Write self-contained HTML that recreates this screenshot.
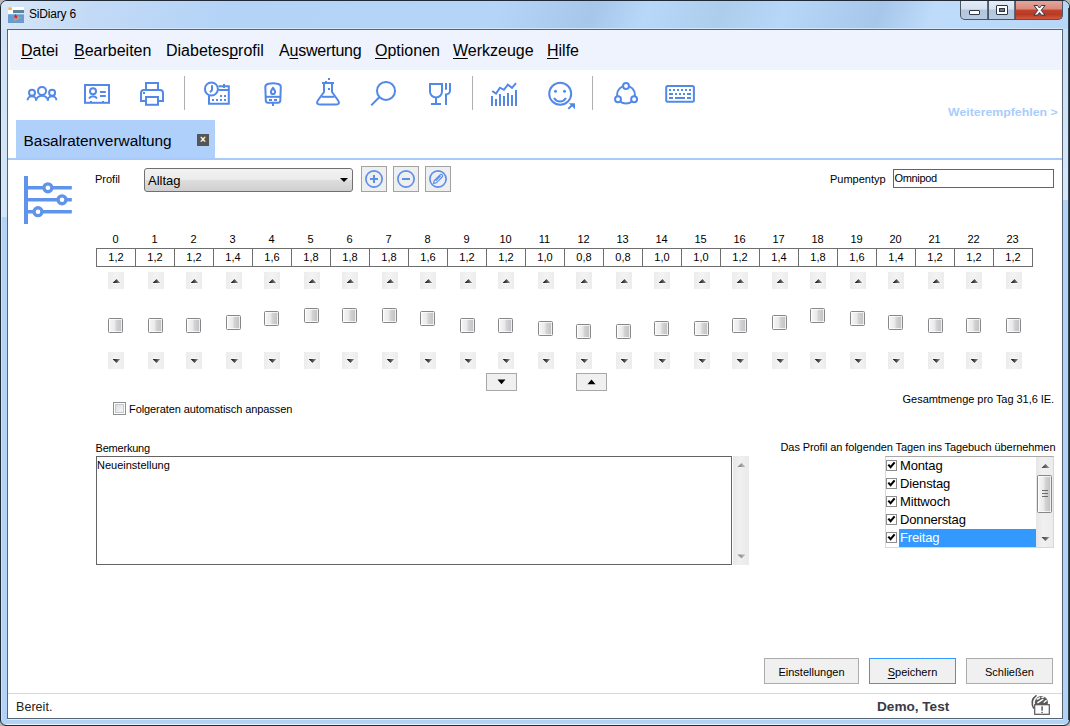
<!DOCTYPE html><html><head><meta charset="utf-8"><style>
*{margin:0;padding:0;box-sizing:border-box}
html,body{width:1070px;height:726px;overflow:hidden;background:#b8b8b8}
body{position:relative;font-family:"Liberation Sans",sans-serif;color:#000}
.a{position:absolute}
#frame{left:0;top:0;width:1070px;height:726px;border:1px solid #1f2a36;border-radius:7px 7px 6px 6px;
 background:#b3d3f6}
#client{left:7px;top:29px;width:1056px;height:690px;border:1px solid #566473;background:#fff}
.t11{font-size:11px}
u{text-decoration:underline;text-underline-offset:1.5px;text-decoration-thickness:1px;text-decoration-skip-ink:none}
.grid{left:96px;top:248px;height:19px;width:937px;border:1px solid #6e6e6e;border-right:none}
.cell{position:absolute;top:0;height:17px;width:39px;border-right:1px solid #6e6e6e;text-align:center;font-size:11px;line-height:17px}
.hr{position:absolute;top:232px;width:39px;text-align:center;font-size:11px;line-height:14px}
.sb{position:absolute;width:16px;height:17px;background:linear-gradient(90deg,#ececec,#f3f3f3 50%,#ececec)}
.up::after{content:"";position:absolute;left:5px;top:7px;border-left:3px solid transparent;border-right:3px solid transparent;border-bottom:3px solid #333}
.dn::after{content:"";position:absolute;left:5px;top:7px;border-left:3px solid transparent;border-right:3px solid transparent;border-top:3px solid #333}
.th{position:absolute;width:15px;height:15px;border:1px solid #878787;border-radius:1.5px;box-shadow:inset 0 0 0 1px rgba(255,255,255,0.75);
 background:linear-gradient(90deg,#f7f7f7 0%,#e8e8e8 48%,#d6d6d8 52%,#bfbfc3 100%)}
.btn{position:absolute;border:1px solid #adadad;background:#e1e1e1;font-size:11px;text-align:center}
</style></head><body>
<div id="frame" class="a"></div>
<div class="a" style="left:1px;top:1px;width:1068px;height:28px;border-radius:6px 6px 0 0;background:linear-gradient(110deg,#d9e7f7 0px,#c2daf6 90px,#b3d3f7 220px,#b4d4f8 470px,#a7c7ea 560px,#b8d8fa 610px,#adcdec 680px,#b7d7f9 740px,#a7c7ea 830px,#bedbfa 880px,#b4d4f6 1070px)"></div>
<div class="a" style="left:1px;top:29px;width:6px;height:188px;background:linear-gradient(#cfe2f7,#d3e5f8)"></div>
<div class="a" style="left:1063px;top:29px;width:6px;height:171px;background:linear-gradient(#c7def8,#d6e7f8)"></div>
<div class="a" style="left:1068px;top:8px;width:1px;height:712px;background:#3a4650"></div>
<svg class="a" style="left:8px;top:7px" width="16" height="16" viewBox="8 7 16 16"><rect x="8" y="7" width="16" height="7.2" fill="#fff"/><rect x="8" y="14.3" width="16" height="8.7" fill="#6a9ad2"/><rect x="8.3" y="7.3" width="3.6" height="2.6" fill="#f7b04a"/><rect x="13" y="10" width="11" height="3.2" fill="#3e6f8a" opacity="0.85"/><path d="M14 21.5 L21 18 L18.5 16.5 L13.5 19 Z" fill="#a6a48c"/><path d="M15.5 14.2 Q17.6 16 17 18 Q15.2 18.6 14.4 17 Q14.2 15.5 15.5 14.2 Z" fill="#ff1010"/></svg>
<div class="a" style="left:29px;top:6px;font-size:12px;letter-spacing:-0.2px;line-height:16px;color:#000">SiDiary 6</div>
<div class="a" style="left:960px;top:1px;width:103px;height:19px;border:1px solid #4a5866;border-top:none;border-radius:0 0 5px 5px;overflow:hidden;background:#4a5866"><div class="a" style="left:0;top:0;width:27px;height:18px;background:linear-gradient(#e4ecf6 0%,#d6e2f0 45%,#b4c6dc 50%,#b9cbe0 100%);border-right:1px solid #5a6a7a"></div><div class="a" style="left:28px;top:0;width:26px;height:18px;background:linear-gradient(#e4ecf6 0%,#d6e2f0 45%,#b4c6dc 50%,#b9cbe0 100%);border-right:1px solid #5a6a7a"></div><div class="a" style="left:55px;top:0;width:47px;height:18px;background:linear-gradient(#e6a499 0%,#d98a7c 45%,#c2432b 50%,#b93a24 75%,#d2583c 100%)"></div><svg class="a" style="left:-1px;top:0" width="103" height="19"><g stroke="#2c3848" stroke-width="1" fill="#fff"><rect x="9.5" y="9.5" width="10" height="4" rx="0.5"/><rect x="36.5" y="4.5" width="11" height="9" rx="0.5"/><rect x="39.5" y="7.5" width="5" height="3" fill="#6a7a8c" stroke="#2c3848"/><path d="M74 4.5 h3.5 l2 2.5 l2 -2.5 h3.5 l-3.8 4.8 l3.8 4.8 h-3.5 l-2 -2.5 l-2 2.5 h-3.5 l3.8 -4.8 z" stroke-linejoin="round"/></g></svg></div>
<div class="a" style="left:7px;top:28px;width:1056px;height:1px;background:#d4e6fa"></div>
<div id="client" class="a"></div>
<div class="a" style="left:7px;top:719px;width:1056px;height:1px;background:#dcedfc"></div>
<div class="a" style="left:6px;top:724px;width:1058px;height:1px;background:#f0f8fe"></div>
<div class="a" style="left:1px;top:8px;width:1px;height:712px;background:#d8e8f8;opacity:0.8"></div>
<div class="a" style="left:10px;top:30px;width:1051px;height:40px;background:#eef3fd"></div>
<div class="a" style="left:21px;top:42px;font-size:16px;line-height:18px;"><u>D</u>atei</div>
<div class="a" style="left:74px;top:42px;font-size:16px;line-height:18px;"><u>B</u>earbeiten</div>
<div class="a" style="left:166px;top:42px;font-size:16px;line-height:18px;">Diabetes<u>p</u>rofil</div>
<div class="a" style="left:279px;top:42px;font-size:16px;line-height:18px;letter-spacing:-0.2px;">A<u>u</u>swertung</div>
<div class="a" style="left:375px;top:42px;font-size:16px;line-height:18px;"><u>O</u>ptionen</div>
<div class="a" style="left:453px;top:42px;font-size:16px;line-height:18px;"><u>W</u>erkzeuge</div>
<div class="a" style="left:547px;top:42px;font-size:16px;line-height:18px;"><u>H</u>ilfe</div>
<svg class="a" style="left:0;top:0" width="1070" height="120" viewBox="0 0 1070 120"><g fill="none" stroke="#5289e8" stroke-width="2"><circle cx="42" cy="90.9" r="4"/><circle cx="32" cy="92.8" r="3"/><circle cx="52.1" cy="92.8" r="3"/><path d="M36 100.8 A6 5 0 0 1 48 100.8"/><path d="M27.6 100.2 A4.3 3.9 0 0 1 36.2 100.2"/><path d="M47.8 100.2 A4.3 3.9 0 0 1 56.4 100.2"/><rect x="85" y="85" width="24" height="17.8"/><circle cx="93" cy="91.3" r="3"/><path d="M89 98.6 A4.6 4.6 0 0 1 97 98.6"/><path d="M100 92 H105.8 M100 96 H105.8"/><path d="M146 90 V83 H158 V90"/><path d="M146 101 H141 V93 Q141 90 144 90 H160 Q163 90 163 93 V101 H158"/><rect x="146" y="97" width="12" height="7.8"/><circle cx="211.4" cy="89" r="6.5"/><path d="M212 85.3 V90.2 L210 92.2"/><path d="M218.5 86.2 H228.8 V103.7 H209 V95.6"/><path d="M218.3 90 H228.8"/><path d="M224 84 V88"/><path d="M265.3 87 Q265.3 84.6 267.8 84 Q273 82.7 278.2 84 Q280.8 84.6 280.8 87 L280.3 100.6 Q280.3 102.7 278.2 102.7 H267.8 Q265.8 102.7 265.8 100.6 Z"/><path d="M265.6 96.8 H280.6"/><path d="M273 102.7 V106"/><path d="M273 88 Q275.1 90.6 275.1 92 A2.1 2.1 0 0 1 270.9 92 Q270.9 90.6 273 88 Z"/><path d="M322 82.9 H334 M324 83 V92 L318.2 100 Q316.5 102.4 317.4 103.7 Q318.2 104.6 320.6 104.6 H335.4 Q337.8 104.6 338.6 103.7 Q339.5 102.4 337.8 100 L332 92 V83"/><path d="M321.5 96.8 H334.5"/><circle cx="386" cy="90.9" r="9"/><path d="M379.3 97.3 L371.2 105.4"/><path d="M430 84 H442 V91.5 A6 6 0 0 1 430 91.5 Z"/><path d="M436 97.5 V104 M431 104 H441"/><path d="M446 83 V89.7 M450 83 V90.5 A4 4 0 0 1 446 94.5 V105"/><path d="M492.2 91 L496 93.6 L500 87.7 L503.9 89.8 L507.9 84.6 L512 87.9 L516 83.1"/></g><g fill="#5289e8"><rect x="491" y="96" width="2" height="10"/><rect x="495" y="99" width="2" height="7"/><rect x="499" y="94" width="2" height="12"/><rect x="503" y="96" width="2" height="10"/><rect x="507" y="93" width="2" height="13"/><rect x="511" y="95" width="2" height="11"/><rect x="515" y="90" width="2" height="16"/><rect x="143" y="92" width="2" height="2"/><rect x="90" y="101" width="2" height="1"/><rect x="102" y="101" width="2" height="1"/><rect x="220" y="95" width="2" height="2"/><rect x="224" y="95" width="2" height="2"/><rect x="212" y="99" width="2" height="2"/><rect x="216" y="99" width="2" height="2"/><rect x="220" y="99" width="2" height="2"/><rect x="224" y="99" width="2" height="2"/><rect x="269" y="99" width="3" height="2"/><rect x="274" y="99" width="3" height="2"/><rect x="328" y="78" width="2" height="2"/><rect x="328" y="88" width="2" height="2"/><rect x="325" y="81" width="2" height="1"/><circle cx="555.5" cy="91.3" r="1.5"/><circle cx="564.5" cy="91.3" r="1.5"/><rect x="669" y="89" width="2" height="2"/><rect x="673" y="89" width="2" height="2"/><rect x="677" y="89" width="2" height="2"/><rect x="681" y="89" width="2" height="2"/><rect x="685" y="89" width="2" height="2"/><rect x="689" y="89" width="2" height="2"/><rect x="669" y="93" width="4" height="2"/><rect x="675" y="93" width="2" height="2"/><rect x="679" y="93" width="2" height="2"/><rect x="683" y="93" width="2" height="2"/><rect x="687" y="93" width="4" height="2"/><rect x="669" y="97" width="4" height="2"/><rect x="675" y="97" width="10" height="2"/><rect x="687" y="97" width="4" height="2"/><path d="M568.8 103.2 H575 V109.2 Z"/></g><g fill="none" stroke="#5289e8" stroke-width="2"><circle cx="560.2" cy="93.8" r="11"/><path d="M554 98 A7 7 0 0 0 566 98"/><path d="M568.3 108.9 L573 104.2"/><circle cx="626" cy="94.7" r="8.9"/><g fill="#fff"><circle cx="626" cy="86" r="2.95"/><circle cx="618" cy="99.2" r="2.95"/><circle cx="634.1" cy="99.2" r="2.95"/></g><rect x="666.2" y="86" width="27.7" height="15.8" rx="1.5"/></g><rect x="184" y="76" width="1" height="34" fill="#b0b0b0"/><rect x="472" y="76" width="1" height="34" fill="#b0b0b0"/><rect x="592" y="76" width="1" height="34" fill="#b0b0b0"/></svg>
<div class="a" style="left:16px;top:120px;width:199px;height:38px;background:#b0d0fc"></div>
<div class="a" style="left:8px;top:158px;width:1054px;height:2px;background:#a8cafb"></div>
<div class="a" style="left:23.6px;top:132px;font-size:15.4px;line-height:18px">Basalratenverwaltung</div>
<div class="a" style="left:197px;top:134px;width:12px;height:12px;background:#555;color:#fff;font-size:10px;line-height:12px;text-align:center;font-weight:bold">×</div>
<div class="a" style="left:948px;top:105px;font-size:11px;transform:scaleX(1.12);transform-origin:0 0;white-space:nowrap;font-weight:bold;color:#a9cdfb;line-height:14px">Weiterempfehlen &gt;</div>
<svg class="a" style="left:0;top:160px" width="90" height="80" viewBox="0 160 90 80"><rect x="24" y="176" width="4" height="48" fill="#6094ea"/><g stroke="#6094ea" stroke-width="3.6" fill="none"><path d="M28 187.8 H71.8 M28 199.8 H71.8 M28 211.7 H71.8"/></g><g stroke="#6094ea" stroke-width="3.3" fill="#fff"><circle cx="47.9" cy="187.8" r="3.95"/><circle cx="62" cy="199.8" r="3.95"/><circle cx="38" cy="211.7" r="3.95"/></g></svg>
<div class="a t11" style="left:95px;top:173px;line-height:13px">Profil</div>
<div class="a" style="left:144px;top:168px;width:209px;height:24px;border:1px solid #707070;border-radius:3px;background:linear-gradient(#f2f2f2 0%,#ebebeb 50%,#dddddd 51%,#cfcfcf 100%)"></div>
<div class="a" style="left:148px;top:173px;font-size:13px;line-height:16px">Alltag</div>
<div class="a" style="left:340px;top:178px;border-left:4px solid transparent;border-right:4px solid transparent;border-top:4px solid #000"></div>
<div class="a" style="left:361px;top:166px;width:26px;height:26px;border:1px solid #a2a2a2;background:#efefef"></div>
<div class="a" style="left:393px;top:166px;width:26px;height:26px;border:1px solid #a2a2a2;background:#efefef"></div>
<div class="a" style="left:425px;top:166px;width:26px;height:26px;border:1px solid #a2a2a2;background:#efefef"></div>
<svg class="a" style="left:0;top:0" width="470" height="200"><g fill="none" stroke="#5b8fea" stroke-width="1.7"><circle cx="374" cy="179" r="8.1"/><circle cx="406" cy="179" r="8.1"/><circle cx="438" cy="179" r="8.1"/></g><g fill="#5b8fea"><rect x="370" y="178" width="8" height="2"/><rect x="373" y="175" width="2" height="8"/><rect x="402" y="178" width="8" height="2"/></g><path d="M434.2 180.6 L440 174.8 A1.3 1.3 0 0 1 442.2 177 L436.4 182.8 L433.6 183.4 Z M435.6 180.8 L440.6 175.8" fill="none" stroke="#5b8fea" stroke-width="1.2"/></svg>
<div class="a t11" style="left:830px;top:173px;line-height:13px">Pumpentyp</div>
<div class="a" style="left:893px;top:169px;width:161px;height:19px;border:1px solid #646464;background:#fff"></div>
<div class="a t11" style="left:894.5px;top:172px;letter-spacing:-0.35px;line-height:13px">Omnipod</div>
<div class="a grid">
<div class="cell" style="left:0px">1,2</div>
<div class="cell" style="left:39px">1,2</div>
<div class="cell" style="left:78px">1,2</div>
<div class="cell" style="left:117px">1,4</div>
<div class="cell" style="left:156px">1,6</div>
<div class="cell" style="left:195px">1,8</div>
<div class="cell" style="left:234px">1,8</div>
<div class="cell" style="left:273px">1,8</div>
<div class="cell" style="left:312px">1,6</div>
<div class="cell" style="left:351px">1,2</div>
<div class="cell" style="left:390px">1,2</div>
<div class="cell" style="left:429px">1,0</div>
<div class="cell" style="left:468px">0,8</div>
<div class="cell" style="left:507px">0,8</div>
<div class="cell" style="left:546px">1,0</div>
<div class="cell" style="left:585px">1,0</div>
<div class="cell" style="left:624px">1,2</div>
<div class="cell" style="left:663px">1,4</div>
<div class="cell" style="left:702px">1,8</div>
<div class="cell" style="left:741px">1,6</div>
<div class="cell" style="left:780px">1,4</div>
<div class="cell" style="left:819px">1,2</div>
<div class="cell" style="left:858px">1,2</div>
<div class="cell" style="left:897px">1,2</div>
</div>
<div class="hr" style="left:96px">0</div>
<div class="sb" style="left:108px;top:272px"></div>
<div class="th" style="left:108px;top:318px"></div>
<div class="sb" style="left:108px;top:352px"></div>
<div class="hr" style="left:135px">1</div>
<div class="sb" style="left:148px;top:272px"></div>
<div class="th" style="left:148px;top:318px"></div>
<div class="sb" style="left:148px;top:352px"></div>
<div class="hr" style="left:174px">2</div>
<div class="sb" style="left:186px;top:272px"></div>
<div class="th" style="left:186px;top:318px"></div>
<div class="sb" style="left:186px;top:352px"></div>
<div class="hr" style="left:213px">3</div>
<div class="sb" style="left:226px;top:272px"></div>
<div class="th" style="left:226px;top:315px"></div>
<div class="sb" style="left:226px;top:352px"></div>
<div class="hr" style="left:252px">4</div>
<div class="sb" style="left:264px;top:272px"></div>
<div class="th" style="left:264px;top:311px"></div>
<div class="sb" style="left:264px;top:352px"></div>
<div class="hr" style="left:291px">5</div>
<div class="sb" style="left:304px;top:272px"></div>
<div class="th" style="left:304px;top:308px"></div>
<div class="sb" style="left:304px;top:352px"></div>
<div class="hr" style="left:330px">6</div>
<div class="sb" style="left:342px;top:272px"></div>
<div class="th" style="left:342px;top:308px"></div>
<div class="sb" style="left:342px;top:352px"></div>
<div class="hr" style="left:369px">7</div>
<div class="sb" style="left:382px;top:272px"></div>
<div class="th" style="left:382px;top:308px"></div>
<div class="sb" style="left:382px;top:352px"></div>
<div class="hr" style="left:408px">8</div>
<div class="sb" style="left:420px;top:272px"></div>
<div class="th" style="left:420px;top:311px"></div>
<div class="sb" style="left:420px;top:352px"></div>
<div class="hr" style="left:447px">9</div>
<div class="sb" style="left:460px;top:272px"></div>
<div class="th" style="left:460px;top:318px"></div>
<div class="sb" style="left:460px;top:352px"></div>
<div class="hr" style="left:486px">10</div>
<div class="sb" style="left:498px;top:272px"></div>
<div class="th" style="left:498px;top:318px"></div>
<div class="sb" style="left:498px;top:352px"></div>
<div class="hr" style="left:525px">11</div>
<div class="sb" style="left:538px;top:272px"></div>
<div class="th" style="left:538px;top:321px"></div>
<div class="sb" style="left:538px;top:352px"></div>
<div class="hr" style="left:564px">12</div>
<div class="sb" style="left:576px;top:272px"></div>
<div class="th" style="left:576px;top:324px"></div>
<div class="sb" style="left:576px;top:352px"></div>
<div class="hr" style="left:603px">13</div>
<div class="sb" style="left:616px;top:272px"></div>
<div class="th" style="left:616px;top:324px"></div>
<div class="sb" style="left:616px;top:352px"></div>
<div class="hr" style="left:642px">14</div>
<div class="sb" style="left:654px;top:272px"></div>
<div class="th" style="left:654px;top:321px"></div>
<div class="sb" style="left:654px;top:352px"></div>
<div class="hr" style="left:681px">15</div>
<div class="sb" style="left:694px;top:272px"></div>
<div class="th" style="left:694px;top:321px"></div>
<div class="sb" style="left:694px;top:352px"></div>
<div class="hr" style="left:720px">16</div>
<div class="sb" style="left:732px;top:272px"></div>
<div class="th" style="left:732px;top:318px"></div>
<div class="sb" style="left:732px;top:352px"></div>
<div class="hr" style="left:759px">17</div>
<div class="sb" style="left:772px;top:272px"></div>
<div class="th" style="left:772px;top:315px"></div>
<div class="sb" style="left:772px;top:352px"></div>
<div class="hr" style="left:798px">18</div>
<div class="sb" style="left:810px;top:272px"></div>
<div class="th" style="left:810px;top:308px"></div>
<div class="sb" style="left:810px;top:352px"></div>
<div class="hr" style="left:837px">19</div>
<div class="sb" style="left:850px;top:272px"></div>
<div class="th" style="left:850px;top:311px"></div>
<div class="sb" style="left:850px;top:352px"></div>
<div class="hr" style="left:876px">20</div>
<div class="sb" style="left:888px;top:272px"></div>
<div class="th" style="left:888px;top:315px"></div>
<div class="sb" style="left:888px;top:352px"></div>
<div class="hr" style="left:915px">21</div>
<div class="sb" style="left:928px;top:272px"></div>
<div class="th" style="left:928px;top:318px"></div>
<div class="sb" style="left:928px;top:352px"></div>
<div class="hr" style="left:954px">22</div>
<div class="sb" style="left:966px;top:272px"></div>
<div class="th" style="left:966px;top:318px"></div>
<div class="sb" style="left:966px;top:352px"></div>
<div class="hr" style="left:993px">23</div>
<div class="sb" style="left:1006px;top:272px"></div>
<div class="th" style="left:1006px;top:318px"></div>
<div class="sb" style="left:1006px;top:352px"></div>
<div class="a" style="left:486px;top:373px;width:31px;height:18px;border:1px solid #a8a8a8;background:#f0f0f0"></div>
<div class="a" style="left:576px;top:373px;width:31px;height:18px;border:1px solid #a8a8a8;background:#f0f0f0"></div>
<svg class="a" style="left:0;top:0" width="1070" height="400"><defs><linearGradient id="tg" x1="0" x2="1" y1="0" y2="0"><stop offset="0" stop-color="#000"/><stop offset="1" stop-color="#9a9a9a"/></linearGradient></defs><g fill="none" stroke="#fff" stroke-width="1.2" stroke-linejoin="round" opacity="0.9"><path d="M112.6 283 L116.5 279 L120.4 283 Z"/><path d="M112.6 359 L120.4 359 L116.5 363 Z"/><path d="M152.6 283 L156.5 279 L160.4 283 Z"/><path d="M152.6 359 L160.4 359 L156.5 363 Z"/><path d="M190.6 283 L194.5 279 L198.4 283 Z"/><path d="M190.6 359 L198.4 359 L194.5 363 Z"/><path d="M230.6 283 L234.5 279 L238.4 283 Z"/><path d="M230.6 359 L238.4 359 L234.5 363 Z"/><path d="M268.6 283 L272.5 279 L276.4 283 Z"/><path d="M268.6 359 L276.4 359 L272.5 363 Z"/><path d="M308.6 283 L312.5 279 L316.4 283 Z"/><path d="M308.6 359 L316.4 359 L312.5 363 Z"/><path d="M346.6 283 L350.5 279 L354.4 283 Z"/><path d="M346.6 359 L354.4 359 L350.5 363 Z"/><path d="M386.6 283 L390.5 279 L394.4 283 Z"/><path d="M386.6 359 L394.4 359 L390.5 363 Z"/><path d="M424.6 283 L428.5 279 L432.4 283 Z"/><path d="M424.6 359 L432.4 359 L428.5 363 Z"/><path d="M464.6 283 L468.5 279 L472.4 283 Z"/><path d="M464.6 359 L472.4 359 L468.5 363 Z"/><path d="M502.6 283 L506.5 279 L510.4 283 Z"/><path d="M502.6 359 L510.4 359 L506.5 363 Z"/><path d="M542.6 283 L546.5 279 L550.4 283 Z"/><path d="M542.6 359 L550.4 359 L546.5 363 Z"/><path d="M580.6 283 L584.5 279 L588.4 283 Z"/><path d="M580.6 359 L588.4 359 L584.5 363 Z"/><path d="M620.6 283 L624.5 279 L628.4 283 Z"/><path d="M620.6 359 L628.4 359 L624.5 363 Z"/><path d="M658.6 283 L662.5 279 L666.4 283 Z"/><path d="M658.6 359 L666.4 359 L662.5 363 Z"/><path d="M698.6 283 L702.5 279 L706.4 283 Z"/><path d="M698.6 359 L706.4 359 L702.5 363 Z"/><path d="M736.6 283 L740.5 279 L744.4 283 Z"/><path d="M736.6 359 L744.4 359 L740.5 363 Z"/><path d="M776.6 283 L780.5 279 L784.4 283 Z"/><path d="M776.6 359 L784.4 359 L780.5 363 Z"/><path d="M814.6 283 L818.5 279 L822.4 283 Z"/><path d="M814.6 359 L822.4 359 L818.5 363 Z"/><path d="M854.6 283 L858.5 279 L862.4 283 Z"/><path d="M854.6 359 L862.4 359 L858.5 363 Z"/><path d="M892.6 283 L896.5 279 L900.4 283 Z"/><path d="M892.6 359 L900.4 359 L896.5 363 Z"/><path d="M932.6 283 L936.5 279 L940.4 283 Z"/><path d="M932.6 359 L940.4 359 L936.5 363 Z"/><path d="M970.6 283 L974.5 279 L978.4 283 Z"/><path d="M970.6 359 L978.4 359 L974.5 363 Z"/><path d="M1010.6 283 L1014.5 279 L1018.4 283 Z"/><path d="M1010.6 359 L1018.4 359 L1014.5 363 Z"/></g><g fill="url(#tg)"><path d="M112.6 283 L116.5 279 L120.4 283 Z"/><path d="M112.6 359 L120.4 359 L116.5 363 Z"/><path d="M152.6 283 L156.5 279 L160.4 283 Z"/><path d="M152.6 359 L160.4 359 L156.5 363 Z"/><path d="M190.6 283 L194.5 279 L198.4 283 Z"/><path d="M190.6 359 L198.4 359 L194.5 363 Z"/><path d="M230.6 283 L234.5 279 L238.4 283 Z"/><path d="M230.6 359 L238.4 359 L234.5 363 Z"/><path d="M268.6 283 L272.5 279 L276.4 283 Z"/><path d="M268.6 359 L276.4 359 L272.5 363 Z"/><path d="M308.6 283 L312.5 279 L316.4 283 Z"/><path d="M308.6 359 L316.4 359 L312.5 363 Z"/><path d="M346.6 283 L350.5 279 L354.4 283 Z"/><path d="M346.6 359 L354.4 359 L350.5 363 Z"/><path d="M386.6 283 L390.5 279 L394.4 283 Z"/><path d="M386.6 359 L394.4 359 L390.5 363 Z"/><path d="M424.6 283 L428.5 279 L432.4 283 Z"/><path d="M424.6 359 L432.4 359 L428.5 363 Z"/><path d="M464.6 283 L468.5 279 L472.4 283 Z"/><path d="M464.6 359 L472.4 359 L468.5 363 Z"/><path d="M502.6 283 L506.5 279 L510.4 283 Z"/><path d="M502.6 359 L510.4 359 L506.5 363 Z"/><path d="M542.6 283 L546.5 279 L550.4 283 Z"/><path d="M542.6 359 L550.4 359 L546.5 363 Z"/><path d="M580.6 283 L584.5 279 L588.4 283 Z"/><path d="M580.6 359 L588.4 359 L584.5 363 Z"/><path d="M620.6 283 L624.5 279 L628.4 283 Z"/><path d="M620.6 359 L628.4 359 L624.5 363 Z"/><path d="M658.6 283 L662.5 279 L666.4 283 Z"/><path d="M658.6 359 L666.4 359 L662.5 363 Z"/><path d="M698.6 283 L702.5 279 L706.4 283 Z"/><path d="M698.6 359 L706.4 359 L702.5 363 Z"/><path d="M736.6 283 L740.5 279 L744.4 283 Z"/><path d="M736.6 359 L744.4 359 L740.5 363 Z"/><path d="M776.6 283 L780.5 279 L784.4 283 Z"/><path d="M776.6 359 L784.4 359 L780.5 363 Z"/><path d="M814.6 283 L818.5 279 L822.4 283 Z"/><path d="M814.6 359 L822.4 359 L818.5 363 Z"/><path d="M854.6 283 L858.5 279 L862.4 283 Z"/><path d="M854.6 359 L862.4 359 L858.5 363 Z"/><path d="M892.6 283 L896.5 279 L900.4 283 Z"/><path d="M892.6 359 L900.4 359 L896.5 363 Z"/><path d="M932.6 283 L936.5 279 L940.4 283 Z"/><path d="M932.6 359 L940.4 359 L936.5 363 Z"/><path d="M970.6 283 L974.5 279 L978.4 283 Z"/><path d="M970.6 359 L978.4 359 L974.5 363 Z"/><path d="M1010.6 283 L1014.5 279 L1018.4 283 Z"/><path d="M1010.6 359 L1018.4 359 L1014.5 363 Z"/></g><path d="M497.5 379.6 H505.5 L501.5 384.2 Z" fill="#000"/><path d="M587.5 384.2 H595.5 L591.5 379.6 Z" fill="#000"/></svg>
<div class="a" style="left:113px;top:402px;width:13px;height:13px;border:1px solid #8e8e8e;background:#fff"></div>
<div class="a" style="left:115px;top:404px;width:9px;height:9px;border:1px solid #c3c7ce;background:linear-gradient(135deg,#d8dce2,#f7f7f7)"></div>
<div class="a t11" style="left:129px;top:403px;letter-spacing:-0.08px;line-height:13px">Folgeraten automatisch anpassen</div>
<div class="a t11" style="left:902.6px;top:393px;letter-spacing:-0.04px;line-height:13px">Gesamtmenge pro Tag 31,6 IE.</div>
<div class="a t11" style="left:95.5px;top:441.5px;letter-spacing:-0.2px;line-height:13px">Bemerkung</div>
<div class="a t11" style="left:780.5px;top:441px;letter-spacing:-0.09px;line-height:13px">Das Profil an folgenden Tagen ins Tagebuch übernehmen</div>
<div class="a" style="left:96px;top:456px;width:636px;height:109px;border:1px solid #646464;background:#fff"></div>
<div class="a" style="left:97px;top:459px;font-size:11px;line-height:13px">Neueinstellung</div>
<div class="a" style="left:733px;top:456px;width:16px;height:109px;background:linear-gradient(90deg,#e8e8e8,#f0f0f0 40%,#eaeaea)"></div>
<div class="a" style="left:885px;top:456px;width:169px;height:92px;border:1px solid #d5d8de;border-top-color:#a9a9a9;background:#fff"></div>
<div class="a" style="left:886px;top:460px;width:11px;height:11px;border:1px solid #8e8e8e;background:#fff"></div>
<div class="a" style="left:900px;top:458px;font-size:13px;letter-spacing:-0.15px;line-height:16px;color:#000">Montag</div>
<div class="a" style="left:886px;top:478px;width:11px;height:11px;border:1px solid #8e8e8e;background:#fff"></div>
<div class="a" style="left:900px;top:476px;font-size:13px;letter-spacing:-0.15px;line-height:16px;color:#000">Dienstag</div>
<div class="a" style="left:886px;top:496px;width:11px;height:11px;border:1px solid #8e8e8e;background:#fff"></div>
<div class="a" style="left:900px;top:494px;font-size:13px;letter-spacing:-0.15px;line-height:16px;color:#000">Mittwoch</div>
<div class="a" style="left:886px;top:514px;width:11px;height:11px;border:1px solid #8e8e8e;background:#fff"></div>
<div class="a" style="left:900px;top:512px;font-size:13px;letter-spacing:-0.15px;line-height:16px;color:#000">Donnerstag</div>
<div class="a" style="left:899px;top:529px;width:137px;height:18px;background:#3399ff"></div>
<div class="a" style="left:886px;top:532px;width:11px;height:11px;border:1px solid #8e8e8e;background:#fff"></div>
<div class="a" style="left:900px;top:530px;font-size:13px;letter-spacing:-0.15px;line-height:16px;color:#fff">Freitag</div>
<div class="a" style="left:1036px;top:457px;width:17px;height:90px;background:linear-gradient(90deg,#e6e6e6,#f0f0f0 40%,#ececec)"></div>
<div class="a th" style="left:1037px;top:475px;width:15px;height:38px"></div>
<svg class="a" style="left:0;top:0" width="1070" height="600"><defs><linearGradient id="ag" x1="0" x2="1" y1="0" y2="0"><stop offset="0" stop-color="#333"/><stop offset="1" stop-color="#999"/></linearGradient><linearGradient id="ag2" x1="0" x2="1" y1="0" y2="0"><stop offset="0" stop-color="#7a7a7a"/><stop offset="1" stop-color="#c4c4c4"/></linearGradient></defs><path d="M888.3 464.6 L890.6 467.2 L894.6 462.4" fill="none" stroke="#000" stroke-width="2.1"/><path d="M888.3 482.6 L890.6 485.2 L894.6 480.4" fill="none" stroke="#000" stroke-width="2.1"/><path d="M888.3 500.6 L890.6 503.2 L894.6 498.4" fill="none" stroke="#000" stroke-width="2.1"/><path d="M888.3 518.6 L890.6 521.2 L894.6 516.4" fill="none" stroke="#000" stroke-width="2.1"/><path d="M888.3 536.6 L890.6 539.2 L894.6 534.4" fill="none" stroke="#000" stroke-width="2.1"/><path d="M1041.5 468 L1045.5 464 L1049.5 468 Z M1041.5 537 L1049.5 537 L1045.5 541 Z" fill="url(#ag)"/><path d="M1042 490.5 H1048 M1042 493.5 H1048 M1042 496.5 H1048" stroke="#6a6a6a" stroke-width="1"/><path d="M737.5 467 L741.5 463 L745.5 467 Z M737.5 554.5 L745.5 554.5 L741.5 558.5 Z" fill="url(#ag2)"/></svg>
<div class="btn" style="left:764px;top:658px;width:95px;height:26px;border-color:#acacac;background:#f0f0f0;line-height:24px;padding-top:1px">Einstellungen</div>
<div class="btn" style="left:869px;top:658px;width:87px;height:26px;border-color:#3399ff;background:#f0f0f0;line-height:24px;padding-top:1px"><u>S</u>peichern</div>
<div class="btn" style="left:966px;top:658px;width:87px;height:26px;border-color:#acacac;background:#f0f0f0;line-height:24px;padding-top:1px">Schließen</div>
<div class="a" style="left:8px;top:693px;width:1054px;height:1px;background:#d9d9d9"></div>
<div class="a" style="left:16px;top:700px;font-size:12.5px;letter-spacing:0.05px;line-height:14px;color:#222">Bereit.</div>
<div class="a" style="left:877px;top:699px;font-size:13.6px;line-height:15px;font-weight:bold;color:#3a3a44">Demo, Test</div>
<svg class="a" style="left:1026px;top:692px" width="30" height="26" viewBox="1026 692 30 26"><path d="M1036.5 695.3 Q1029.5 700 1033.8 708.6" fill="none" stroke="#555" stroke-width="1.5"/><circle cx="1041.4" cy="702.6" r="6.6" fill="#5a5a5a"/><path d="M1037.3 699.2 L1039.6 697.8 M1037.8 702.6 L1042.8 699.4 M1044.2 702.2 L1046.2 700.6 M1042 697.4 L1043.8 697" stroke="#fff" stroke-width="1.4" stroke-linecap="round"/><rect x="1034.7" y="704.7" width="14.6" height="9.6" fill="#fff" stroke="#555" stroke-width="1.2"/><rect x="1041.3" y="706.3" width="1.6" height="4.4" fill="#666"/><rect x="1041.3" y="711.8" width="1.6" height="1.2" fill="#666"/></svg>
</body></html>
